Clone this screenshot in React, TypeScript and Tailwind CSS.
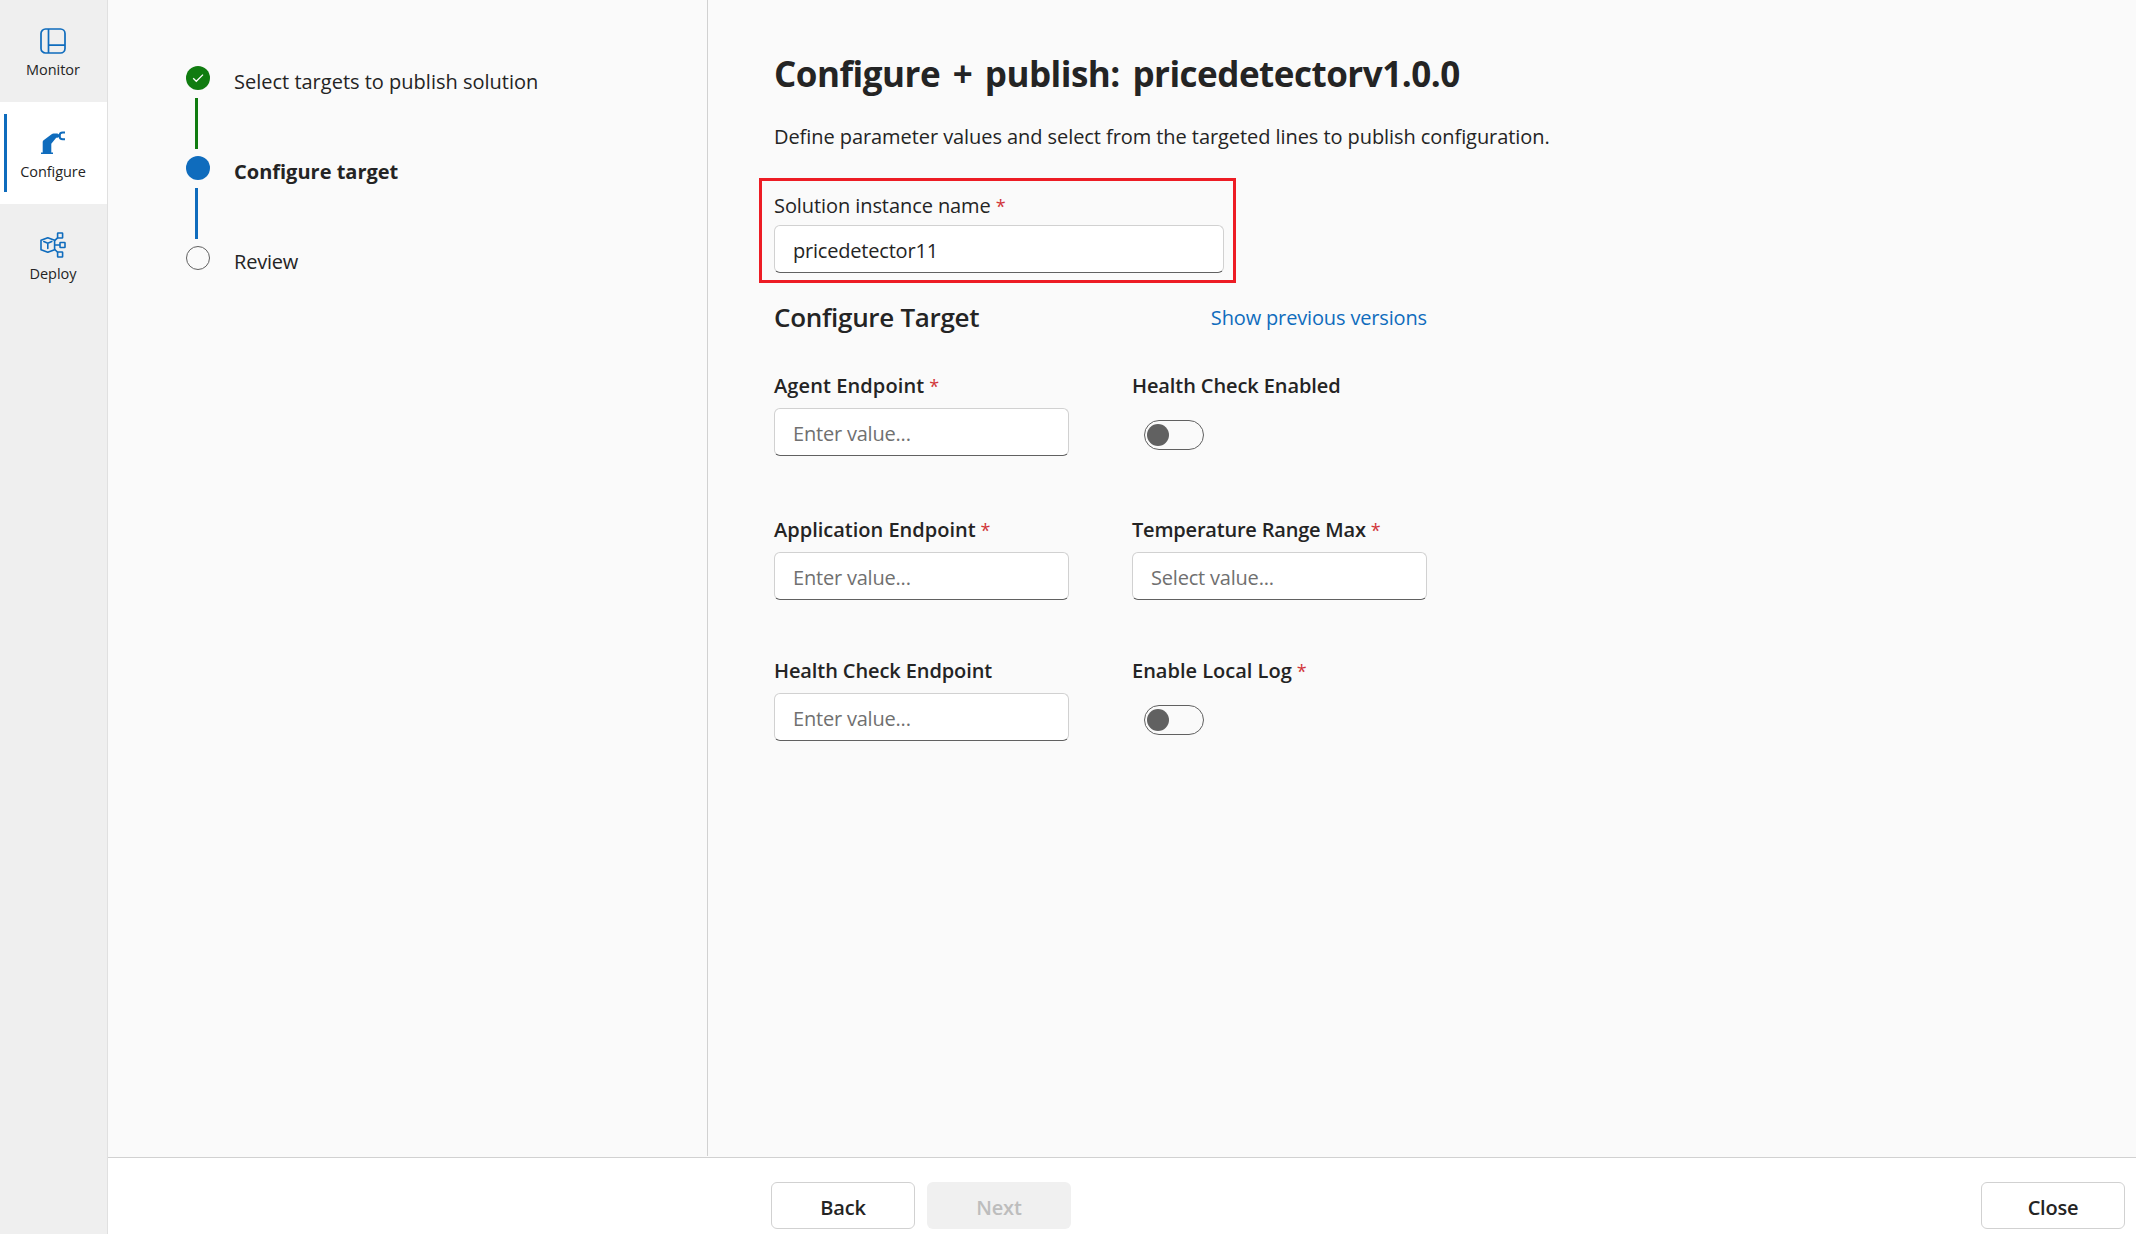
import type { ReactNode } from "react";

function MonitorIcon() {
  return (
    <svg className="size-[26px]" viewBox="0 0 26 26" fill="none" stroke="#0f6cbd" strokeWidth="1.700">
      <rect x="1" y="1" width="24" height="24" rx="4.5" />
      <path d="M8.5 1v24M8.5 17.2H25" />
    </svg>
  );
}

function RobotArmIcon() {
  return (
    <svg className="size-[26px]" viewBox="0 0 26 26" fill="none">
      <path
        d="M1 22.6h1.700V12c0-.8.3-1.300.9-1.800L11.600 4.200c.6-.5 1.200-.7 2-.7h4.200v4.300h-1.600l-4.900 6v8.800H13V24H1z"
        fill="#0f6cbd"
      />
      <path
        d="M25 2.500h-2.200c-2 0-3.300 1.500-3.300 3.400s1.300 3.400 3.300 3.400H25"
        stroke="#0f6cbd"
        strokeWidth="1.900"
      />
      <path d="M17 5.700h3.500" stroke="#0f6cbd" strokeWidth="3" />
    </svg>
  );
}

function DeployIcon() {
  return (
    <svg className="size-[26px]" viewBox="0 0 26 26" fill="none" stroke="#0f6cbd" strokeWidth="1.600" strokeLinejoin="round">
      <path d="M7.800 5.700 14.600 8.300v9.400L7.800 20.300 1 17.700V8.300z" />
      <path d="M3.800 9.600 7.800 11.200l4-1.600M7.800 11.200v5.200" strokeLinecap="round" />
      <path d="M14.600 8.600 17.600 5.800M14.600 13H20M14.600 17.200l3 3" />
      <rect x="17.600" y="1" width="5" height="5" rx=".5" />
      <rect x="20" y="10.500" width="5" height="5" rx=".5" />
      <rect x="17.600" y="20" width="5" height="5" rx=".5" />
    </svg>
  );
}

function NavItem({ icon, label, active = false }: { icon: ReactNode; label: string; active?: boolean }) {
  return (
    <a className={`relative flex h-[102px] flex-col items-center pr-px pt-7 ${active ? "bg-white" : ""}`}>
      {active && <span className="absolute left-1 top-3 h-[78px] w-[3px] bg-[#0f6cbd]" />}
      {icon}
      <span className="mt-1.5 text-[14.500px] leading-5 tracking-[-0.05px]">{label}</span>
    </a>
  );
}

function Required() {
  return <span className="ml-[5px] text-[18px] font-normal text-[#d13438]">*</span>;
}

function TextInput({ placeholder, value }: { placeholder?: string; value?: string }) {
  return (
    <input
      className="block h-12 w-full rounded-md border border-[#d1d1d1] border-b-[#616161] bg-white px-[18px] pt-0.5 text-[20px] tracking-[-0.2px] text-[#242424] placeholder:text-[#707070]"
      placeholder={placeholder}
      defaultValue={value}
    />
  );
}

function Toggle() {
  return (
    <button className="ml-3 mt-[19px] flex h-[30px] w-[60px] items-center rounded-full border border-[#616161] px-0.5 pb-px">
      <span className="size-[22px] rounded-full bg-[#616161]" />
    </button>
  );
}

type FieldProps = { label: string; required?: boolean; tracking?: string; children: ReactNode };

function Field({ label, required = false, tracking = "tracking-[-0.1px]", children }: FieldProps) {
  return (
    <div>
      <div className={`mb-[7px] mt-px h-[30px] whitespace-nowrap text-[20px] font-[550] leading-[30px] ${tracking}`}>
        {label}
        {required && <Required />}
      </div>
      {children}
    </div>
  );
}

export default function App() {
  return (
    <div className="flex h-[1234px] w-[2136px] overflow-hidden bg-[#fafafa] font-['Open_Sans',sans-serif] text-[#242424]">
      <nav className="w-[108px] shrink-0 border-r border-[#e0e0e0] bg-[#efefef]">
        <NavItem icon={<MonitorIcon />} label="Monitor" />
        <NavItem icon={<RobotArmIcon />} label="Configure" active />
        <NavItem icon={<DeployIcon />} label="Deploy" />
      </nav>

      <div className="flex min-w-0 flex-1 flex-col">
        <div className="flex h-[1157px] pb-px">
          <aside className="w-[600px] shrink-0 border-r border-[#d1d1d1] pl-[78px] pt-[66px] text-[20px] leading-8">
            <div className="flex h-[90px] gap-6">
              <div className="flex w-6 flex-col items-center">
                <span className="flex size-6 items-center justify-center rounded-full bg-[#107c10]">
                  <svg className="size-3" viewBox="0 0 12 12" fill="none" stroke="white" strokeWidth="1.300">
                    <path d="M1.200 6.300 4.300 9.300 11 2.600" />
                  </svg>
                </span>
                <span className="mr-[3px] mt-2 h-[51px] w-[3px] bg-[#107c10]" />
              </div>
              <span>Select targets to publish solution</span>
            </div>
            <div className="flex h-[90px] gap-6">
              <div className="flex w-6 flex-col items-center">
                <span className="size-6 rounded-full bg-[#0f6cbd]" />
                <span className="mr-[3px] mt-2 h-[51px] w-[3px] bg-[#0f6cbd]" />
              </div>
              <span className="font-bold">Configure target</span>
            </div>
            <div className="flex gap-6">
              <span className="size-6 rounded-full border-[1.500px] border-[#616161]" />
              <span className="tracking-[-0.2px]">Review</span>
            </div>
          </aside>

          <main className="pl-[51px] pt-[50px]">
            <h1 className="pl-[15px] text-[35px] font-bold leading-[48px] tracking-[-0.500px] [word-spacing:4px]">
              Configure + publish: pricedetectorv1.0.0
            </h1>
            <p className="mt-6 pl-[15px] text-[20px] leading-[30px] tracking-[-0.070px]">
              Define parameter values and select from the targeted lines to publish configuration.
            </p>
            <div className="mt-[26px] h-[105px] w-[477px] border-[3px] border-[#ed1c24] px-[9px] pl-3 pt-2.5">
              <div className="mb-1 text-[20px] leading-[30px] tracking-[-0.080px]">
                Solution instance name
                <Required />
              </div>
              <div className="w-[450px]">
                <TextInput value="pricedetector11" />
              </div>
            </div>
            <div className="mt-4 flex w-[668px] items-start justify-between pl-[15px]">
              <h2 className="text-[26px] font-[550] leading-9 tracking-[-0.3px]">Configure Target</h2>
              <a className="mt-1 text-[20px] leading-[30px] tracking-[-0.150px] text-[#0f6cbd]">Show previous versions</a>
            </div>
            <div className="mt-[35px] grid grid-cols-[295px_295px] grid-rows-[144px_141px_86px] gap-x-[63px] pl-[15px]">
              <Field label="Agent Endpoint" required tracking="tracking-[0.1px]">
                <TextInput placeholder="Enter value..." />
              </Field>
              <Field label="Health Check Enabled">
                <Toggle />
              </Field>
              <Field label="Application Endpoint" required tracking="tracking-normal">
                <TextInput placeholder="Enter value..." />
              </Field>
              <Field label="Temperature Range Max" required tracking="tracking-[-0.2px]">
                <TextInput placeholder="Select value..." />
              </Field>
              <Field label="Health Check Endpoint">
                <TextInput placeholder="Enter value..." />
              </Field>
              <Field label="Enable Local Log" required tracking="tracking-normal">
                <Toggle />
              </Field>
            </div>
          </main>
        </div>

        <footer className="flex h-[77px] items-start border-t border-[#d1d1d1] bg-white pl-[663px] pr-[11px] pt-6 text-[20px] font-[550] tracking-[-0.2px]">
          <button className="h-[47px] w-36 rounded-md border border-[#d1d1d1] bg-white pt-1">Back</button>
          <button className="ml-3 h-[47px] w-36 rounded-md bg-[#f0f0f0] pt-1 text-[#bdbdbd]">Next</button>
          <button className="ml-auto h-[47px] w-36 rounded-md border border-[#d1d1d1] bg-white pt-1">Close</button>
        </footer>
      </div>
    </div>
  );
}
